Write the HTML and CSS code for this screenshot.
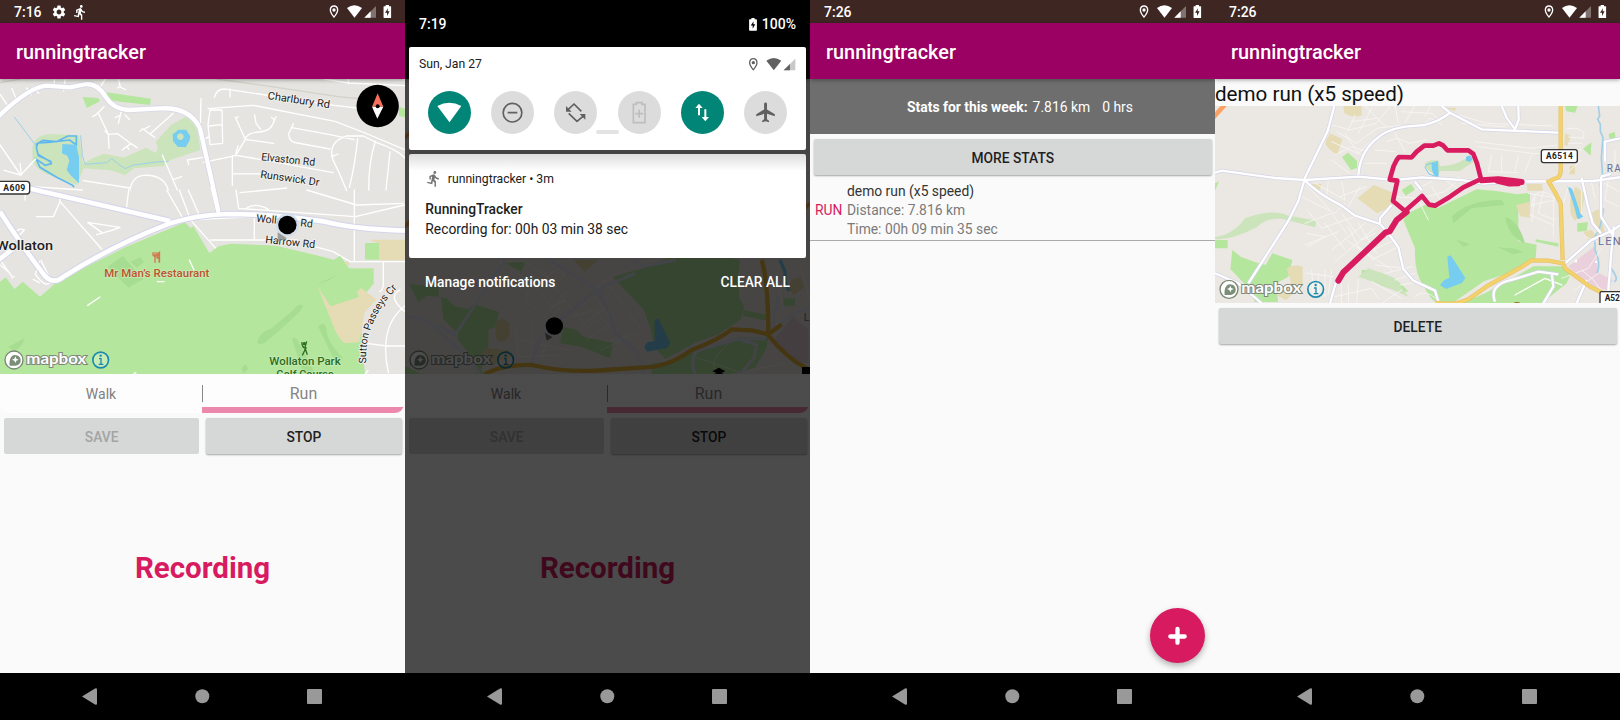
FILE: index.html
```html
<!DOCTYPE html>
<html lang="en">
<head>
<meta charset="utf-8">
<title>runningtracker</title>
<link rel="stylesheet" href="styles.css">
</head>
<body>
<svg class="defs" width="0" height="0">
  <defs>
    <symbol id="runner" viewBox="0 0 24 24"><path d="M13.49 5.48c1.1 0 2-.9 2-2s-.9-2-2-2-2 .9-2 2 .9 2 2 2zm-3.6 13.9l1-4.4 2.1 2v6h2v-7.5l-2.1-2 .6-3c1.3 1.5 3.3 2.5 5.5 2.5v-2c-1.9 0-3.5-1-4.3-2.4l-1-1.6c-.4-.6-1-1-1.7-1-.3 0-.5.1-.8.1l-5.2 2.2v4.7h2v-3.4l1.8-.7-1.6 8.1-4.9-1-.4 2 7 1.4z"/></symbol>
    <symbol id="gear" viewBox="0 0 24 24"><path d="M19.14 12.94c.04-.3.06-.61.06-.94 0-.32-.02-.64-.07-.94l2.03-1.58c.18-.14.23-.41.12-.61l-1.92-3.32c-.12-.22-.37-.29-.59-.22l-2.39.96c-.5-.38-1.03-.7-1.62-.94l-.36-2.54c-.04-.24-.24-.41-.48-.41h-3.84c-.24 0-.43.17-.47.41l-.36 2.54c-.59.24-1.13.57-1.62.94l-2.39-.96c-.22-.08-.47 0-.59.22L2.74 8.87c-.12.21-.08.47.12.61l2.03 1.58c-.05.3-.09.63-.09.94s.02.64.07.94l-2.03 1.58c-.18.14-.23.41-.12.61l1.92 3.32c.12.22.37.29.59.22l2.39-.96c.5.38 1.03.7 1.62.94l.36 2.54c.05.24.24.41.48.41h3.84c.24 0 .44-.17.47-.41l.36-2.54c.59-.24 1.13-.56 1.62-.94l2.39.96c.22.08.47 0 .59-.22l1.92-3.32c.12-.22.07-.47-.12-.61l-2.01-1.58zM12 15.6c-1.98 0-3.6-1.62-3.6-3.6s1.62-3.6 3.6-3.6 3.6 1.62 3.6 3.6-1.62 3.6-3.6 3.6z"/></symbol>
    <symbol id="battery" viewBox="0 0 24 40"><path fill-rule="evenodd" d="M7 0h10v4h5q2 0 2 2v31q0 2-2 2H2q-2 0-2-2V6q0-2 2-2h5zM14 10L5 23h6v10l8-14h-6z"/></symbol>
    <symbol id="signals" viewBox="985 10 145 50">
      <path fill-rule="evenodd" d="M1001 16c-8 0-13 6-13 14 0 10 13 24 13 24s13-14 13-24c0-8-5-14-13-14zm0 4c6 0 9 4 9 10s-5 13-9 18c-4-5-9-12-9-18s3-10 9-10z"/>
      <circle cx="1001" cy="30" r="5"/>
      <path d="M1040 24q22-16 45 0l-22.500 29z"/>
      <path d="M1127 18v35h-35z" opacity=".35"/><path d="M1111 34v19h-19z"/>
    </symbol>
    <symbol id="bar-icons" viewBox="980 0 200 70"><use href="#signals" x="985" y="10" width="145" height="50"/><use href="#battery" x="1149" y="15" width="24" height="40"/></symbol>
    <symbol id="mapbox" viewBox="0 480 340 64">
      <g stroke="#7b8775" stroke-width="4" fill="#fff"><circle cx="42" cy="510" r="27"/></g>
      <path d="M29 527c-2-15 2-31 16-32 22 0 23 31 2 32z" fill="#7b8f78"/><path d="M46 499l3 7 7 3-7 3-3 7-3-7-7-3 7-3z" fill="#fff"/>
      <text class="logo-text" x="79" y="522" textLength="180" lengthAdjust="spacingAndGlyphs">mapbox</text>
      <circle cx="302" cy="510" r="23.500" fill="#fff" fill-opacity=".25" stroke="#1b8bad" stroke-width="5"/><path d="M297 506h6v17M296 523h14" fill="none" stroke="#1b8bad" stroke-width="4"/><circle cx="302" cy="497" r="3.500" fill="#1b8bad"/>
    </symbol>
  </defs>
</svg>
<main class="board">

<section class="screen">
  <header class="status"><span class="clock">7:16</span><svg class="ico-gear"><use href="#gear"/></svg><svg class="ico-run"><use href="#runner"/></svg><svg class="bar-icons"><use href="#bar-icons"/></svg></header>
  <div class="appbar">runningtracker</div>
  <svg class="map map-tall" viewBox="0 237 1215 885" preserveAspectRatio="none">
    <rect y="237" width="1215" height="885" fill="#e5e4e0"/>
    <path class="lime" d="M248 291l45 3q15 8-5 16l-28 14zM314 276l139 20-3 19-90-10-47-8zM1197 320l18 6v26l-18-4z"/>
    <path class="sage" d="M97 440q10-35 50-38l90 4 12 85q30-20 64-30l58 12 68-30 28 16 7-14-6-20 45-50 45-25q30 20 35 50l8 50-90 30-20 18-88 7-28 20-44-14-80-6-20 50-68-24q-46-14-65-46z"/>
    <g fill="none" stroke="#5eb8ef" stroke-width="5"><path d="M107 434l22-13 40 4 35-17h25v27l-20-15-65 7-30 2-5 13 6 25 37 17 2 7-18 5-27-18 11 24 50 30 48 24 4 6M115 463l40 25"/></g>
    <path class="water" d="M187 432l42 2 8 38v78l-25-24-12-16 8-28-6-15-16-7z"/>
    <path class="water" fill-rule="evenodd" d="M518 403l18-14h22l13 20-3 14-11 19-24-2-14-17zm23-3a10 10 0 1 0 .1 0z"/>
    <path d="M43 351l64 85m135-30l5 60 8 27 65-5 15-12 25 20 16 10 20-10 34-5 40-5 35-2" fill="none" stroke="#9bd0ea" stroke-width="3"/>
    <path class="line" stroke="#d2d2c8" stroke-width="4" d="M650 237l145 20 220 33 60 6M0 248l60-11"/>
    <g class="streets">
      <path d="M0 283l22 32M36 266l14 34M80 264l14 20M98 262l18 18M163 240v24M195 240l-4 32M300 262l16-25M355 237l6 24 15 8M360 260l-8 4M312 320l-24 24-10 6M295 340l30 63-10-10M325 403l2 42M325 403l28-2 40 30 18 12M393 431l-18 12-8 7M381 440l6 8M365 330l-10 40M362 345l-16 8M375 345l14 14M520 340l-70 62-22-16-8 8M450 378l-15 8M450 402l14 10M603 296l-3 120 12 5M643 292q8-30 40-24l320 48 120 14M690 267v24M630 330h36l2 100-38 4-6-60zM627 378l38-4M614 418l12-8M624 326l135-10 246 48 90 35 120 50M706 352l30 66 85 12M708 355l6-5M736 418q4-20 42-22t46-38l4-8M764 345l4 25 14 18M824 360l-10-8M711 460l25-42M610 487l100-21 290 52M697 466v90M697 521l105 1M706 466l8-28M880 371l-14 30q0 25 26 28l98 18M876 383l110 20 76 16M1040 572q-20-50-40-90-20-55 40-74h50l40 20q60 20 85 46M1073 416q-8 80-25 146M995 470l20-8M1126 424q-20 60-20 146M1170 456l-12 114M1045 237v14M972 237l74 12 170 8M0 435l62 90 45-48M12 511l50 14M64 525l-4-35M487 465l45 105M545 530l-24 8M562 480l4 14M610 472l-48 8M390 570q6-40 40-44 60-4 75 44M250 542l140 22M97 560l150 10"/>
      <g transform="translate(0 570)"><path d="M110 80l50 0 20-45 125 142M180 35l-4-28M380 50l6-50M75 0v30M305 127l-42-30 97 15q-10 5-70 22M500 0l47 82M538 0l32 85M565 0l35 80M570 88l78 88M600 88l165-8M763 82v64M632 150l260 0M708 0l8 55 350 25 147-35M1063 0v215M740 54q26-18 66 4M920 0l150 45 140-5M720 8l140-14M0 210l35 48M36 264l6-5M0 225l25 20M45 150l28-30q-20-10-30 15M118 215l-12 38q38 52 50 12M100 268l18 10M123 212l28 56M945 170l55 15 50 30h165M1150 215v70q-2 15-10 20M1200 300q-40 20 15 65M1215 348q-80 60-50 200M1100 460l60 8h55"/></g>
    </g>
    <g transform="translate(0 570)">
      <path class="lime" d="M0 275l17-13 27 35 24-22 52 45 55-48 200-100 180-75 17 18 8-7 48 81 28-20 36-8 136 6 118 28 56 14 18-12 28 38h73v46l-30 36-10 6 6 150 10 100 0 30H0z"/>
      <path d="M953 291l39 58 85-28-7-16 14-11 45 35-35 38-16 90-46 2q-24-25-32-52zM1108 149h107v62h-80v-50zM1034 220l10-8 6 16z" fill="#e5dcb5"/><path class="lime" d="M1095 159h42v50h-42z"/>
      <path d="M323 230l45-32 62 70-45 25zM392 215l28-14 12 15-22 17zM25 470l50-25-10 20-20 20zM775 445q10-20 40-30l65-55q20-25 30-12-10 20-30 35-60 55-85 75-30 12-20-13zM955 410q14-20 24 4 0 40 50 90-10 20-34-10zM875 445q15-5 20 10l50 95h-35zM725 532l12-10 8 14-15 15zM950 284l60-30q-20 18-60 30z" fill="#a7dd91"/>
      <g class="streets strong"><path d="M263 346l37-25M568 210l14 30M472 275h20M402 550l6-2M1096 552l8-10"/></g>
    </g>
    <g class="roads">
      <path d="M-5 350q90-88 145-93l70 5 50-10q35 0 58 40 22 35 70 38l92-5q90-5 120 60l55 248" stroke="#d7d7e8" stroke-width="18"/><path d="M-5 350q90-88 145-93l70 5 50-10q35 0 58 40 22 35 70 38l92-5q90-5 120 60l55 248" stroke="#fff" stroke-width="13"/>
      <path d="M85 565l425 98M0 635q75 115 125 180 30 45 65 15 160-100 320-160 80-25 170-28 150 0 290 22 90 24 250 28M-5 780l40-30" stroke="#d4d4ec" stroke-width="20"/><path d="M85 565l425 98M0 635q75 115 125 180 30 45 65 15 160-100 320-160 80-25 170-28 150 0 290 22 90 24 250 28M-5 780l40-30" stroke="#fff" stroke-width="14"/>
      <path d="M636 560l20 80" stroke="#fff" stroke-width="11"/>
    </g>
    <g class="map-label" font-size="32">
      <text transform="translate(802 297) rotate(8.500)" textLength="188" lengthAdjust="spacingAndGlyphs">Charlbury Rd</text><text transform="translate(783 481) rotate(6)" textLength="162" lengthAdjust="spacingAndGlyphs">Elvaston Rd</text><text transform="translate(780 533) rotate(8)" textLength="178" lengthAdjust="spacingAndGlyphs">Runswick Dr</text>
      <text transform="translate(768 665) rotate(6)" textLength="170" lengthAdjust="spacingAndGlyphs">Wollaton Rd</text><text transform="translate(795 729) rotate(6)" textLength="150" lengthAdjust="spacingAndGlyphs">Harrow Rd</text>
      <text x="-12" y="749" font-size="40" font-weight="500" textLength="171" lengthAdjust="spacingAndGlyphs">Wollaton</text>
      <path id="crescent" d="M1099 1090Q1090 970 1188 868" fill="none" stroke="none"/><text font-size="31"><textPath href="#crescent">Sutton Passeys Cr</textPath></text>
    </g>
    <rect x="-9" y="544" width="98" height="38" rx="9" fill="#fff" stroke="#333" stroke-width="4"/><text class="road-no" x="10" y="572" font-size="26" textLength="66">A609</text>
    <circle cx="862" cy="675" r="35" fill="#cfdcec" opacity=".8"/><path d="M833 697v28l28-10z" fill="#888" opacity=".8"/><circle cx="862" cy="675" r="27.500"/>
    <g fill="none" stroke="#d6754c" stroke-width="4"><path d="M465 757v31M459 757v8q6 8 12 0v-8" /><path d="M478 788v-30q-7 5-6 16h6" stroke-width="5"/></g>
    <text class="poi" x="313" y="830" font-size="34" textLength="315" lengthAdjust="spacingAndGlyphs" fill="#bd532d">Mr Man’s Restaurant</text>
    <g stroke="#2b7020" stroke-width="4" fill="none"><circle cx="913" cy="1031" r="3" fill="#2b7020"/><path d="M906 1026q-2 14 10 18l-3 10-6 12M915 1044l7 20M920 1024l-5 18M908 1042l12 2"/></g>
    <text class="poi green" x="808" y="1095" font-size="34" textLength="214" lengthAdjust="spacingAndGlyphs">Wollaton Park</text><text class="poi green" x="829" y="1135" font-size="34" textLength="172" lengthAdjust="spacingAndGlyphs">Golf Course</text>
    <use href="#mapbox" x="0" y="1050" width="340" height="64"/>
    <circle cx="1133" cy="318" r="63.500"/><path d="M1133 280l17 40h-34z" fill="#f8705b"/><path d="M1116 320h34l-18 36z" fill="#fff"/><circle cx="1133" cy="319" r="6"/>
  </svg>
  <div class="tabs"><span class="tab">Walk</span><span class="tab tab-on">Run</span></div>
  <div class="buttons"><button class="btn btn-off">SAVE</button><button class="btn">STOP</button></div>
  <div class="recording">Recording</div>
  <svg class="nav" viewBox="0 0 405 47"><path d="M82 23.500l13-8q2-1 2 1v14q0 2-2 1z"/><circle cx="202.300" cy="23.300" r="7"/><rect x="307" y="16" width="15" height="15" rx="1"/></svg>
</section>

<section class="screen">
  <header class="status"></header>
  <div class="appbar"></div>
  <svg class="map map-tall" viewBox="0 -543 1215 885" preserveAspectRatio="none">
    <rect y="-543" width="1215" height="885" fill="#ebe6e0"/>
    <path class="lime" d="M12 72l90 10-2 28-35-3-25 20zM108 110l20 8 20 20 40 10 20-16 74 24-10 44-22 10v65l-15 15-6 42 15 10h-28q-10-50-60-105l4-14-45-45zM624 52l60-20 25-5 105-42 70-15 120 30-5 55 4 60 15 25-12 40-70 45-60 20-95 52-8-8q-30-25-35-80l-22-60zM1015 150l75 15v18l-75-15zM1135 115h35v22h-35zM740 310l60-5 100-45 105-30 85 3-5 30-35 60-70 19H740zM0 318l50 24H0zM475 200l40 10 20 20 90 20-10 45-85-35-65-10zM300 10l60-5-10 30zM380-543l100 2-10 20zM430-110l300 0 0 20z"/>
    <path d="M505 0h75l-40 35zM270 185l25-10 18 14v38q-10 20-30 20l-10-14zM230 280l15-15 65 5 10 20-60 25zM1160 60l25-10 15 30-35 25-15-20z" fill="#e3d7a8"/>
    <path class="water" d="M749 178l12-2 8 18 27 55-10 15-60 11-8-15 10-14 21-3z"/>
    <path d="M1125 0l15 35v30l12 28" fill="none" stroke="#77cdf0" stroke-width="10"/>
    <path d="M1105 240l60-70 45 40v100l-30-5z" fill="#e6cfda"/>
    <g class="streets faint"><path d="M290 0l-20 60 40 20 10-50 60 40 90-70M310 80l70-10 60 70 40-20-60-80M380 70l-20 50 70 60 50-50M430 150l50-30 65 80 35-20M560 100l40-40 110 150M520 140l50-30 70 100M500 170l70-20 50 60M480 50l-40-50M350 0l90 60M620 240l80-20M1100 200l70-40 45-15M1180 0l35 120M1115 40l20 110M330 200l10 90 120-5M340 240l150 30M380 190v110M430 230l-20 60M400 70l50-40M440 90l40-50M460 120l55-50M525 200l80-60M545 240l70-50M590 270l80-40M865 290l150 50M970 250q-60 50-40 92M1040 330l100-20"/></g>
    <path d="M0 170q60 0 95 35 100 90 130 137M300 0L150 225l-50-30M420-10l110 70 45 30 40 70 15 60 60 50 25 40v32M380 310q20-80 50-100l145-120 115-50M1215 145q-60 10-115 75l20-110M870 342q-20-60 20-75l110-30 80 0M1010 242l45 12-8 40-42 48M690 0l22 20 100-20" fill="none" stroke="#dfe2f2" stroke-width="9"/>
    <path d="M240 342q60-30 140-27 110 25 220 15l150-10q55-10 110-50 80-30 120-62l60 3 50 12 40-30M1090 225q0-160-20-225M1085 220q60 75 120 105" fill="none" stroke="#e8b43c" stroke-width="13"/>
    <path d="M-20-350l90-80M1130-90l85-80M0-100l55-60" fill="none" stroke="#f0a05a" stroke-width="12"/>
    <path d="M420 218l5 24 18-10z" fill="#777"/><circle cx="448" cy="198" r="26"/><path d="M922 334l20-11 19 11-19 8zM929 340h25v4h-25zM1191 321h24v21h-24z"/><text x="1196" y="184" class="district" font-size="32">L</text>
    <use href="#mapbox" x="0" y="270" width="340" height="64"/>
  </svg>
  <div class="tabs"><span class="tab">Walk</span><span class="tab tab-on">Run</span></div>
  <div class="buttons"><button class="btn btn-off">SAVE</button><button class="btn">STOP</button></div>
  <div class="recording">Recording</div>
  <svg class="nav" viewBox="0 0 405 47"><path d="M82 23.500l13-8q2-1 2 1v14q0 2-2 1z"/><circle cx="202.300" cy="23.300" r="7"/><rect x="307" y="16" width="15" height="15" rx="1"/></svg>
  <div class="shade">
    <div class="shade-status"><span>7:19</span><span class="charge"><svg class="ico-battery"><use href="#battery"/></svg>100%</span></div>
    <div class="panel quick">
      <div class="quick-head"><span>Sun, Jan 27</span><svg class="ico-signals"><use href="#signals"/></svg></div>
      <div class="tiles">
        <svg class="tile tile-on" viewBox="0 0 129 129"><path d="M28 45q36-20 72 0L64.500 94z"/></svg>
        <svg class="tile" viewBox="0 0 129 129"><g class="outline"><circle cx="64.500" cy="65" r="28"/><path d="M50 65h29"/></g></svg>
        <svg class="tile" viewBox="0 0 129 129"><g class="outline" stroke-linejoin="round"><path d="M43 55l17-16 22 22M44 67l25 24 18-15"/></g><path d="M36 45v17h17zM94 69v17L77 69z"/></svg>
        <svg class="tile tile-dim" viewBox="0 0 129 129"><g class="outline"><path d="M46 40h9v-5h17v5h9v55H46zM63.500 56v24M51.500 68h24"/></g></svg>
        <svg class="tile tile-on" viewBox="0 0 129 129"><path d="M54 38l11 13h-8v22h-6V51h-8zM73 91L62 78h8V55h6v23h8z"/></svg>
        <svg class="tile" viewBox="0 0 129 129"><path transform="translate(31 29) scale(2.930)" d="M21 16v-2l-8-5V3.500c0-.83-.67-1.500-1.500-1.500S10 2.670 10 3.500V9l-8 5v2l8-2.500V19l-2 1.500V22l3.500-1 3.500 1v-1.500L13 19v-5.500l8 2.500z"/></svg>
      </div>
      <div class="handle"></div>
    </div>
    <div class="panel note">
      <div class="note-head"><svg class="ico-note"><use href="#runner"/></svg>runningtracker • 3m</div>
      <div class="note-title">RunningTracker</div>
      <div class="note-text">Recording for: 00h 03 min 38 sec</div>
    </div>
    <div class="actions"><span>Manage notifications</span><span>CLEAR ALL</span></div>
  </div>
</section>

<section class="screen">
  <header class="status"><span class="clock">7:26</span><svg class="bar-icons"><use href="#bar-icons"/></svg></header>
  <div class="appbar">runningtracker</div>
  <div class="stats"><b>Stats for this week:</b><span>7.816 km</span><span class="hours">0 hrs</span></div>
  <div class="buttons single"><button class="btn">MORE STATS</button></div>
  <div class="run-row"><span class="kind">RUN</span><div class="run-info"><div class="run-name">demo run (x5 speed)</div><div>Distance: 7.816 km</div><div>Time: 00h 09 min 35 sec</div></div></div>
  <div class="spacer"></div>
  <svg class="nav" viewBox="0 0 405 47"><path d="M82 23.500l13-8q2-1 2 1v14q0 2-2 1z"/><circle cx="202.300" cy="23.300" r="7"/><rect x="307" y="16" width="15" height="15" rx="1"/></svg>
  <svg class="fab" viewBox="0 0 165 165"><path d="M82.500 63v41M61 85.500h43" stroke="#fff" stroke-width="13" stroke-linecap="round"/></svg>
</section>

<section class="screen">
  <header class="status"><span class="clock">7:26</span><svg class="bar-icons"><use href="#bar-icons"/></svg></header>
  <div class="appbar">runningtracker</div>
  <div class="run-title">demo run (x5 speed)</div>
  <svg class="map map-short" viewBox="0 78 1215 592" preserveAspectRatio="none">
    <rect y="78" width="1215" height="592" fill="#ebe7e2"/>
    <path class="lime" d="M381 231l18-13 27 24v22l-18 6zM1050 78h38l-8 20-26-4zM1104 206l25-19-2 40zM1181 162l18-6 4 25-18 4zM560 330l28-18 12 17-28 18zM0 310l12-6-12 28z"/>
    <path class="sage" d="M629 252q10-14 42-10l4 17q50-4 70-20l25-8 4 16-40 26h-60l-3 10q-34-2-42-31zM90 415q80-30 130-8 60 10 85 15l-5 20-95-25q-50-5-80 25-75 40-125 35v-6q55-6 90-56z"/>
    <path class="lime" d="M565 420l15-20 50-25 40 8 115-55 60 5 60 10 40-5v38l-35 8 0 100 55 10-3 40-65 40-90 30-110 76q-40 0-70-60-30-40-27-115zM0 480h38v25H0zM52 510l25 20 40 15 35 10 20-35 60 20-12 50-35 20 4 56h-70l-10-35-25-24-38-40zM962 478l68 12v10l-68-15zM1087 430l32-4-4 26-28 3zM740 670l70-30 85-46 60-35h85l30 18-15 33-75 60zM440 570q85 0 140 65-60 0-140-50z"/>
    <path class="sage" d="M430 590l30-25 80 30 40 55-80-35z"/>
    <path d="M385 78h55v28q-24 10-52-6zM345 160l37 18-15 46q-42-24-34-42zM427 355l50-40 60 25-6 38-45 22zM283 312h36l-6 22h-14zM935 312h46l2 20h-45zM1065 257h15v26h-18zM690 83h34l-4 10zM1065 360l16-40 30 20-12 62-20 20-12-20zM903 375l43-10-2 48-28-4zM918 390h20v20zM1150 388l20 70-20 10-20-70zM215 565q20-14 48-4v50l-50 50-25-14 40-42zM1050 160l18 8-10 28h-10zM1105 455l25-5 20 25-30 5z" fill="#e5dcb5"/>
    <path d="M1060 560l77-60 15 80 42 20-20 30-50-15z" fill="#ead0dc"/>
    <path d="M815 70l30-8M710 410q50-50 150-50l10 15-100 10-55 45zM845 500q20 5 50 5l30 10-30 8zM870 410q40 10 60 80-50-20-60-80zM725 480l40 12-20 8z" fill="#a7dd91"/>
    <path class="water" d="M697 530l10-4 12 18 32 50-10 15-48 18-18-12 12-14 16-8zM650 250l19-4 2 48-14-8-6-16zM753 230l12-4 8 10-8 10-12-4zM1057 318l14 8 14 40 8 25 4 25h-10l-12-45zM1087 390l18 20-10 5z"/><path d="M630 262l5-8 33-10-4 12-14 0M630 262l12 20 26 10" fill="none" stroke="#77cdf0" stroke-width="3"/>
    <path d="M1150 78l4 30-6 10 8 15v20l8 20-5 60 4 55-10 30M1165 385q-5 60-25 85v40q20 45 5 70M1185 560q30 40 12 45" fill="none" stroke="#a2cfe8" stroke-width="5"/>
    <g class="streets thin">
      <path d="M354 135l50 15 80-20 40-50M365 155l60 35 60-45 75-10M390 160l40 60 40-40M360 225l50-25 45 15M400 150l20-45M430 160l40-75M410 125l75-10M450 78l60 60M540 78l10 50M600 78l-30 50M560 95l90 5 30 25M630 110l15-28M350 240l55 40M440 225l-90-40M540 160l30 55M515 185l30-10 40 15 50-10M615 142l30-28 35 20M480 210l60 5M450 250h65M790 200l160 20 80 3M780 185l170 20 75-10M830 225l-10 50 90 3M860 225v50M910 228l-10 45M950 225l-20 50M730 105l85 25 200 8M740 130l130 10M1030 355l-90-15M950 380q5-70 65-30v120M950 375l70-15M945 405l70 30M960 345l-10 80M985 335l-15 65 50 20M1056 145q60-5 50 30l-45-4M1060 190h40M1055 210h45M1100 240l-40 35M1168 310l45 25M1180 250v30"/>
      <path d="M300 310l90 50-10-55M340 300l-5 55M270 310l75 80M375 350l80-30M400 380l35-60M260 350l100 50 30-30M280 395l40 50 100-35M270 430l80-30 45 60M330 430l60 80M380 400l60 80 40-20M275 460l55 10-50 30M270 495l100-40M350 510l100-80M360 545l120-100M275 580l80 10M290 570l5 70M310 580v55M330 570v80M350 570l-10 70M400 440l35 70M430 430l55 90M395 480l85 60M430 500l100 70M450 520l90-40M470 540l80-40M480 555l90 10M510 580l80-20M540 600l60-20M555 615l60-10M360 650l110-25 20 30M380 600v70M400 610v60M430 600l-5 70M470 605l90 50M500 670l60-40M600 650q20-20 50-4l30 24M610 360l30 60M600 330l50-25M635 350l55-15 40-35M650 320l25 38M690 300l45 30M730 290l15 35M535 350l70 5M1040 595l80-30 40-60M1080 630l70-50M1110 470l60 25M1060 320l-15 50M1130 310l10 45M1100 330v70M1180 300l-10 60 40 20M1200 210v70M1100 570l35 30 30 40"/>
      <path d="M900 645l90-50 50 20" stroke="#fff" stroke-width="4"/>
    </g>
    <path d="M0 278l20-6 160 22 90 6 160-10 110 10 80-8 120 8 65 11 80-6 250-2 85-12h115M358 78l-20 75-68 140-20 70-30 60L100 610M430 285q5-65 50-105 30-30 90-40l60-5q50-14 75-37M680 78l25 20 95 50 230 10M860 78l15 35 25 35 11-28-1-42M270 302q40 40 110 75l40 30 75 25 30 35 25 35 15 65 30 35 65 30 18 60M530 375l-35 40 0 15M600 305l20 25M345 670l20-70M1100 295l18 80 15 55 25 30M1158 290v120l35 55M1170 245v-60l45-10M0 580l70 30 70 60M840 665q-20-50 50-65l80-25 60 8M1010 580l5 40-30 50M1050 550l80-70 65-30 20-14M1085 670l30-70M1158 290l30-8M1197 440l-8 75-10 130" fill="none" stroke="#d4d4ea" stroke-width="11"/>
    <path d="M0 278l20-6 160 22 90 6 160-10 110 10 80-8 120 8 65 11 80-6 250-2 85-12h115M358 78l-20 75-68 140-20 70-30 60L100 610M430 285q5-65 50-105 30-30 90-40l60-5q50-14 75-37M680 78l25 20 95 50 230 10M860 78l15 35 25 35 11-28-1-42M270 302q40 40 110 75l40 30 75 25 30 35 25 35 15 65 30 35 65 30 18 60M530 375l-35 40 0 15M600 305l20 25M345 670l20-70M1100 295l18 80 15 55 25 30M1158 290v120l35 55M1170 245v-60l45-10M0 580l70 30 70 60M840 665q-20-50 50-65l80-25 60 8M1010 580l5 40-30 50M1050 550l80-70 65-30 20-14M1085 670l30-70M1158 290l30-8M1197 440l-8 75-10 130" fill="none" stroke="#fff" stroke-width="7"/>
    <path d="M1037 78v195q0 20-20 24l-16 8 20 34 16 31 6 170M660 668q60 10 100-10l60-42 100-55 30-20 50 1 45 8 5 15 75 55 40 20" fill="none" stroke="#e5c36f" stroke-width="13"/><path d="M1037 78v195q0 20-20 24l-16 8 20 34 16 31 6 170M660 668q60 10 100-10l60-42 100-55 30-20 50 1 45 8 5 15 75 55 40 20" fill="none" stroke="#f3d26b" stroke-width="9"/>
    <path d="M-10 118l45-50" stroke="#fca063" stroke-width="14"/>
    <g fill="none" stroke="#d91b5f" stroke-linejoin="round" stroke-linecap="round"><path stroke-width="14" d="M570 393L534 363 547 302 524 299 536 258 545 240 552 231 590 232 605 215 628 197 655 197 672 190 685 197 697 211 760 211 775 222 786 250 798 297 745 322 705 350 660 377 642 374 621 348 570 393"/><path stroke-width="18" d="M370 602L385 577 400 563 455 511 512 457 524 454 545 420 575 396M800 301L850 298 890 302 920 306"/><path stroke-width="13" d="M845 304l38 9 28-1"/></g>
    <rect x="979" y="209" width="108" height="39" rx="7" fill="#fff" stroke="#333" stroke-width="4"/><text class="road-no" x="993" y="238" font-size="25" textLength="80">A6514</text>
    <rect x="1155" y="635" width="90" height="42" rx="5" fill="#fff" stroke="#333" stroke-width="4"/><text class="road-no" x="1169" y="663" font-size="25">A52</text>
    <text class="district" x="1175" y="275" font-size="30">RA</text><text class="district" x="1149" y="494" font-size="33">LEN</text>
    <path d="M894 670q12-8 24 0z" fill="#8b6d16"/><path d="M1078 542l8-4v9h-8zM1140 543h6v6h-6z" fill="#fff"/>
    <use href="#mapbox" x="0" y="598" width="340" height="64"/>
  </svg>
  <div class="buttons single delete"><button class="btn">DELETE</button></div>
  <div class="spacer"></div>
  <svg class="nav" viewBox="0 0 405 47"><path d="M82 23.500l13-8q2-1 2 1v14q0 2-2 1z"/><circle cx="202.300" cy="23.300" r="7"/><rect x="307" y="16" width="15" height="15" rx="1"/></svg>
</section>
</main>
</body>
</html>
```
FILE: styles.css
```css
* { box-sizing: border-box; }
body { margin: 0; font-family: Roboto, "Liberation Sans", sans-serif; color: #202020; background: #fafafa; }
.defs { position: absolute; }
.board { display: grid; grid-template-columns: repeat(4, 405px); height: 720px; overflow: hidden; }
.screen { position: relative; display: flex; flex-direction: column; height: 720px; background: #fafafa; overflow: hidden; }
svg { display: block; flex: none; }

.status { display: flex; align-items: center; flex: none; height: 23.300px; padding: 1px 0 0 14px; background: #3e2723; color: #fff; fill: #fff; font-size: 14px; font-weight: 500; }
.bar-icons { width: 66.670px; height: 23.330px; margin: -1px 11.700px 0 auto; }
.ico-gear { width: 16px; height: 16px; margin-left: 9px; }
.ico-run { width: 16.500px; height: 16.500px; margin-left: 5px; }
.appbar { position: relative; z-index: 1; flex: none; display: flex; align-items: center; height: 55.700px; padding: 2px 16px 0; background: #9b0063; color: #fff; font-size: 19.900px; font-weight: 500; box-shadow: 0 1px 4px rgba(0, 0, 0, .35); }

.map { width: 405px; }
.map-tall { height: 295px; }
.map-short { height: 197.300px; }
.lime { fill: #b5e69e; }
.sage { fill: #cce4bb; }
.water { fill: #77cdf0; }
.line { fill: none; }
.streets { fill: none; stroke: #fff; stroke-width: 4; stroke-linecap: round; stroke-linejoin: round; }
.thin { stroke-width: 2.500; stroke: #f8f7f5; }
.faint { stroke-width: 3; opacity: .55; }
.roads { fill: none; stroke-linejoin: round; }
.map-label { fill: #222; paint-order: stroke; stroke: #f3f2ef; stroke-width: 5; }
.road-no { fill: #222; font-weight: 700; }
.poi { font-weight: 500; paint-order: stroke; stroke: #c9ecb8; stroke-width: 4; }
.green { fill: #2b6e1e; }
.district { fill: #62709c; letter-spacing: 4px; }
.logo-text { font: 700 45px Lato, sans-serif; fill: #fff; stroke: #80887c; stroke-width: 6; paint-order: stroke; }

.tabs { display: grid; grid-template-columns: 202px 202px; flex: none; height: 39px; background: #fdfdfd; color: #808080; font-size: 14px; border-radius: 0 0 9px 9px; overflow: hidden; width: 404px; }
.tab { display: flex; align-items: center; justify-content: center; padding-top: 2px; }
.tab-on { padding: 7px 0 0 1px; border-bottom: 6px solid #ec88ab; font-size: 16px; color: #858585; background: linear-gradient(#888, #888) 0 11px / 1px 17px no-repeat; }
.buttons { display: flex; gap: 7px; flex: none; padding: 5.300px 3.500px 0 4px; }
.btn { flex: 1; height: 36px; padding: 2px 0 0; border: 0; border-radius: 2px; background: #d6d7d7; box-shadow: 0 1px 2px rgba(0, 0, 0, .35); color: #1f1f1f; font: 500 13.800px Roboto, sans-serif; }
.btn-off { box-shadow: none; color: #a3a4a4; }
.recording { flex: 1; padding-top: 96.700px; text-align: center; font-size: 29.500px; font-weight: 700; color: #d81b60; }
.spacer { flex: 1; }
.nav { width: 405px; height: 47px; background: #000; fill: #999; }

.shade { position: absolute; z-index: 2; inset: 0 0 47px; padding: 0 4px; background: linear-gradient(#000 47px, #0b0305 47px, #0b0305 79px, rgba(0, 0, 0, .7) 79px); }
.shade-status { display: flex; justify-content: space-between; align-items: center; height: 47px; padding: 1px 10px 0; color: #fff; fill: #fff; font-size: 14px; font-weight: 500; }
.charge { display: flex; align-items: center; gap: 5px; }
.ico-battery { width: 8px; height: 13px; }
.panel { position: relative; background: #fff; border-radius: 2px; }
.quick { height: 102.700px; }
.quick-head { display: flex; justify-content: space-between; padding: 10px 9.800px 0 10px; font-size: 12.200px; line-height: 15px; fill: #616161; }
.ico-signals { width: 48.300px; height: 16.700px; margin-top: -1px; }
.tiles { display: flex; justify-content: space-between; padding: 18.300px 18.700px 0; }
.tile { width: 43px; height: 43px; border-radius: 50%; background: #dcdcdc; fill: #606060; stroke: none; }
.outline { fill: none; stroke: #606060; stroke-width: 5; }
.tile-on { background: #008577; fill: #fff; }
.tile-dim .outline { stroke: #bebebe; }
.handle { position: absolute; left: 187px; top: 83px; width: 23px; height: 4px; border-radius: 2px; background: #e3e3e3; }
.note { height: 103.700px; margin-top: 4.300px; padding: 17px 16.300px; background: linear-gradient(#dedede, #fff 17px); }
.note-head { display: flex; align-items: center; height: 16px; gap: 5px; font-size: 12.200px; fill: #757575; }
.ico-note { width: 17.500px; height: 17.500px; }
.note-title { margin-top: 13px; font-size: 13.800px; line-height: 19px; font-weight: 500; }
.note-text { font-size: 13.850px; line-height: 20px; }
.actions { display: flex; justify-content: space-between; padding: 15px 16px 0; color: #fff; font-size: 13.800px; line-height: 18px; font-weight: 500; }

.stats { display: flex; align-items: center; height: 54.700px; flex: none; padding: 2px 0 0 97px; gap: 5px; background: #6e6e6e; color: #fff; font-size: 13.900px; }
.hours { margin-left: 7px; }
.run-row { display: flex; align-items: center; flex: none; height: 66.500px; padding: 6px 0 0 5px; border-bottom: 1px solid #aaa; font-size: 13.850px; line-height: 19.200px; color: #7a7a7a; }
.kind { width: 32px; color: #d81b60; }
.run-name { color: #333; }
.fab { position: absolute; z-index: 2; left: 340px; top: 607.500px; width: 55px; height: 55px; border-radius: 50%; background: #d81b60; box-shadow: 0 3px 6px rgba(0, 0, 0, .3); }
.run-title { flex: none; height: 27px; line-height: 30px; font-size: 20.600px; color: #111; }
.delete { padding-top: 5px; }
```
